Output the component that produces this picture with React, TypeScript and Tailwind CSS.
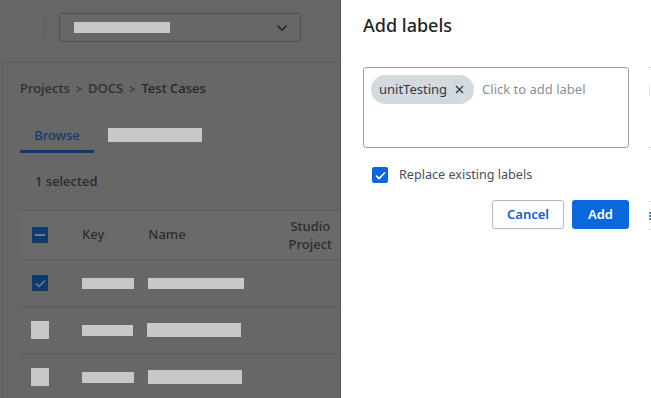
import React from 'react';

const font = { fontFamily: '"Noto Sans", "Open Sans", sans-serif' };

const Bar: React.FC<{ w: string; h?: string }> = ({ w, h = 'h-[11px]' }) => (
  <div className={`${w} ${h} bg-[#c8c9c7]`}></div>
);

const rows = [
  { checked: true, key: 'w-[52px]', name: 'w-[96px]', nameH: 'h-[11px]' },
  { checked: false, key: 'w-[51px]', name: 'w-[94px]', nameH: 'h-[14px]' },
  { checked: false, key: 'w-[52px]', name: 'w-[94px]', nameH: 'h-[14px]' },
];

const Page: React.FC = () => (
  <div className="w-[341px] shrink-0 h-full bg-[#676767] border-r border-[#555555] flex flex-col">
    <div className="h-[63px] shrink-0 border-b border-[#5b5b5b] flex items-start pt-[13px]">
      <div className="ml-[44px] mt-[2px] w-px h-[23px] bg-[#5a5a5a]"></div>
      <div className="ml-[14px] w-[242px] h-[29px] border border-[#4e4e4e] rounded-[3px] flex items-center pl-[14px] pr-[12px]">
        <Bar w="w-[96px]" />
        <svg className="ml-auto" width="12" height="8" viewBox="0 0 12 8" fill="none">
          <path d="M1.5 1.5 L6 6 L10.5 1.5" stroke="#262626" strokeWidth="1.6" />
        </svg>
      </div>
    </div>
    <div className="flex-1 ml-[2px] border-l border-[#5d5d5d] pl-[17px] flex flex-col">
      <div className="mt-[16px] h-[20px] flex items-center gap-[6px] text-[13px] font-medium text-[#2d2d2d]">
        <span>Projects</span>
        <span className="text-[11px]">&gt;</span>
        <span>DOCS</span>
        <span className="text-[11px]">&gt;</span>
        <span className="text-[#242424]">Test Cases</span>
      </div>
      <div className="mt-[26px] flex items-start">
        <div className="w-[74px] flex flex-col items-center">
          <span className="h-[20px] leading-[20px] text-[13px] font-medium text-[#123d70]">Browse</span>
          <div className="mt-[5px] w-full h-[3px] bg-[#0d3a6c]"></div>
        </div>
        <div className="ml-[14px] mt-[3px]">
          <Bar w="w-[94px]" h="h-[14px]" />
        </div>
      </div>
      <div className="mt-[18px] pl-[15px] h-[20px] leading-[20px] text-[13px] font-medium text-[#2a2a2a]">1 selected</div>
      <div className="mt-[19px] shrink-0 border-t border-b border-[#5b5b5b] bg-[#6a6a6a] h-[50px] flex items-center text-[13px] font-medium text-[#2d2d2d]">
        <div className="ml-[12px] w-[16px] h-[16px] bg-[#0f3a6e] flex items-center justify-center">
          <div className="w-[10px] h-[1.5px] bg-[#6f7f93]"></div>
        </div>
        <span className="ml-[34px]">Key</span>
        <span className="ml-[44px]">Name</span>
        <span className="ml-auto mr-[8px] text-center leading-[18px]">Studio<br />Project</span>
      </div>
      {rows.map((r, i) => (
        <div key={i} className="h-[47px] shrink-0 border-b border-[#5b5b5b] flex items-center">
          {r.checked ? (
            <div className="ml-[12px] w-[16px] h-[16px] bg-[#0f3a6e] flex items-center justify-center">
              <svg width="11" height="9" viewBox="0 0 11 9" fill="none">
                <path d="M1 4.5 L4 7.5 L10 1.5" stroke="#6f7f93" strokeWidth="1.5" />
              </svg>
            </div>
          ) : (
            <div className="ml-[11px] w-[18px] h-[18px] bg-[#c8c9c7]"></div>
          )}
          <div className={r.checked ? 'ml-[34px]' : 'ml-[33px]'}>
            <Bar w={r.key} />
          </div>
          <div className="ml-[14px]">
            <Bar w={r.name} h={r.nameH} />
          </div>
        </div>
      ))}
    </div>
  </div>
);

const Drawer: React.FC = () => (
  <div className="flex-1 h-full bg-white overflow-hidden flex">
    <div className="w-[266px] shrink-0 ml-[22px] flex flex-col">
      <h2 className="mt-[12px] h-[26px] leading-[26px] text-[18px] font-medium text-[#1f2328]">Add labels</h2>
      <div className="mt-[29px] h-[81px] border border-[#9aa0a6] rounded-[3px] p-[7px] flex items-start">
        <div className="h-[29px] pl-[8px] pr-[10px] rounded-full bg-[#d2d9df] flex items-center gap-[8px] text-[13px] text-[#333a42]">
          <span>unitTesting</span>
          <svg width="9" height="9" viewBox="0 0 9 9" fill="none">
            <path d="M1 1 L8 8 M8 1 L1 8" stroke="#333a42" strokeWidth="1.3" />
          </svg>
        </div>
        <span className="ml-[8px] h-[29px] leading-[29px] text-[13px] text-[#8a9097]">Click to add label</span>
      </div>
      <label className="mt-[18px] ml-[9px] flex items-center gap-[11px]">
        <div className="w-[16px] h-[16px] rounded-[2px] bg-[#0c66e4] flex items-center justify-center">
          <svg width="11" height="9" viewBox="0 0 11 9" fill="none">
            <path d="M1 4.5 L4 7.5 L10 1.5" stroke="white" strokeWidth="1.6" />
          </svg>
        </div>
        <span className="text-[12.6px] text-[#44505e]">Replace existing labels</span>
      </label>
      <div className="mt-[15px] flex justify-end gap-[8px]">
        <button className="w-[72px] h-[29px] rounded-[3px] border border-[#b4b9bf] bg-white text-[13px] font-semibold text-[#0b63cf]">Cancel</button>
        <button className="w-[57px] h-[29px] rounded-[3px] bg-[#0b67dc] text-[13px] font-semibold text-white">Add</button>
      </div>
    </div>
    <div className="ml-[20px] w-[20px] shrink-0 flex flex-col">
      <div className="mt-[67px] h-[81px] border-t border-b border-[#cfd3d7] pt-[17px]">
        <div className="w-px h-[11px] bg-[#e2e4e6]"></div>
      </div>
      <div className="mt-[53px] h-[29px] border-t border-b border-[#cfd3d7] flex items-center">
        <div className="w-[2px] h-[8px] border-l-2 border-dotted border-[#3f7fd6]"></div>
      </div>
    </div>
  </div>
);

export default function App() {
  return (
    <div style={font} className="w-[651px] h-[398px] overflow-hidden flex">
      <Page />
      <Drawer />
    </div>
  );
}
